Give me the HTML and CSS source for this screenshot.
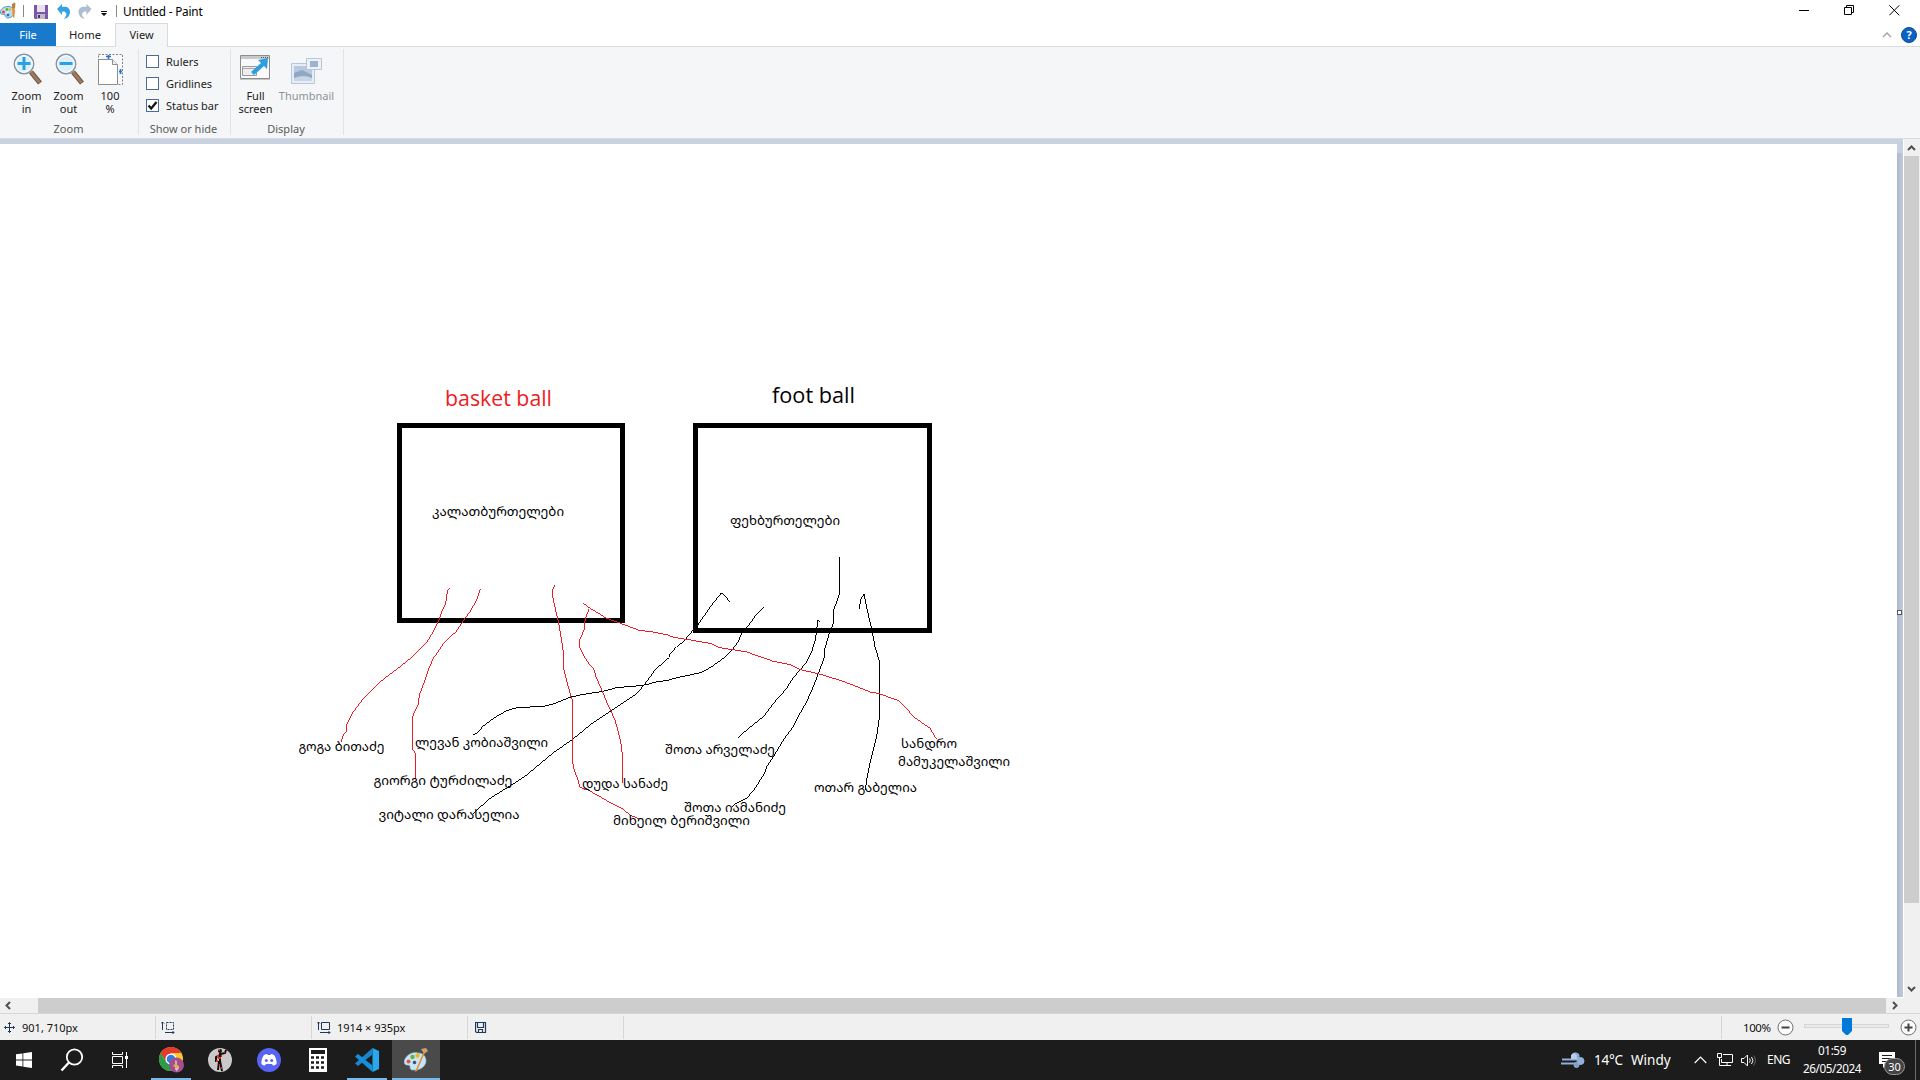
FILE: index.html
```html
<!DOCTYPE html>
<html lang="en">
<head>
<meta charset="utf-8">
<title>Untitled - Paint</title>
<link rel="stylesheet" href="styles.css">
</head>
<body>
<div class="screen">
  <header class="titlebar">
    <svg class="app-icon" width="17" height="18" viewBox="0 0 17 18"><path d="M.5 11C0 7 4 4.500 8 4.500c4 0 6 2 6 5.500s-3 6-6.500 6c-2 0-1.500-2-2.500-3S1 13 .5 11z" fill="#b9def0" stroke="#4a9cc0"/><circle cx="3.500" cy="10" r="1.500" fill="#e8483a"/><circle cx="7" cy="7.500" r="1.400" fill="#5fb236"/><circle cx="10" cy="7.500" r="1.200" fill="#f0b523"/><circle cx="8" cy="13" r="1.400" fill="#2772b8"/><circle cx="7.500" cy="10.500" r="1" fill="#fff"/><path d="M12.200 6h2.600l-.4 10-1.600-1z" fill="#ef8a22"/><path d="M12 2l2.500-1.500L15.500 2 15 6h-3z" fill="#b98048"/></svg>
    <i class="tsep first"></i>
    <svg class="save" width="14" height="14" viewBox="0 0 14 14"><path d="M0 0h14v14H1l-1-1z" fill="#7e55a8"/><path d="M3 0h8v7H3z" fill="#e6e3ee"/><path d="M3 9h8v5H3z" fill="#bdbac8"/><path d="M4 10h2v3H4z" fill="#4d3470"/></svg>
    <svg class="undo" width="14" height="15" viewBox="0 0 14 15"><path d="M0 5l5-5v3c5-1 8 1 8 5 0 3-2 6-6 7 2-3 3-4 2-6-1-1-2-2-4-1v3z" fill="#35a3e3"/></svg>
    <svg class="redo" width="14" height="15" viewBox="0 0 14 15"><path d="M13.500 5l-5-5v3c-5-1-8 1-8 5 0 3 2 6 6 7-2-3-3-4-2-6 1-1 2-2 4-1v3z" fill="#abbfd0"/></svg>
    <svg class="more" width="7" height="5" viewBox="0 0 7 5"><path d="M0 0h6v1H0zM0 2h6L3 5z" fill="#111"/></svg>
    <i class="tsep second"></i>
    <span class="title">Untitled - Paint</span>
    <div class="window-buttons">
      <svg width="11" height="11" viewBox="0 0 11 11"><path d="M0 5.500h10" stroke="#000"/></svg>
      <svg width="11" height="11" viewBox="0 0 11 11" fill="none" stroke="#000"><path d="M.5 2.500h7v7h-7zM2.500 2V.500h7v7H8"/></svg>
      <svg width="11" height="11" viewBox="0 0 11 11"><path d="M.3.300l10 10M10.300.300l-10 10" stroke="#000"/></svg>
    </div>
  </header>
  <nav class="tabs">
    <span class="tab file">File</span><span class="tab home">Home</span><span class="tab view">View</span>
    <div class="tab-tools">
      <svg width="10" height="6" viewBox="0 0 10 6"><path d="M1 5l4-4 4 4" fill="none" stroke="#a0a0a0" stroke-width="1.300"/></svg>
      <span class="help">?</span>
    </div>
  </nav>
  <section class="ribbon">
    <div class="group zoom-group">
      <div class="tools">
        <div class="tool lens">
          <svg width="30" height="33" viewBox="0 0 30 33"><path d="M18 19l9 11" stroke="#66513f" stroke-width="5"/><path d="M18 19l8.500 10.500" stroke="#a1785a" stroke-width="3"/><circle cx="11" cy="11" r="9.700" fill="#dff0fa" stroke="#8796a5" stroke-width="1.600"/><circle cx="11" cy="11" r="8.300" fill="none" stroke="#fff"/><path d="M4.500 10.500h13M11 4v13" stroke="#2ba0e5" stroke-width="3"/></svg>
          <span>Zoom<br>in</span>
        </div>
        <div class="tool lens">
          <svg width="30" height="33" viewBox="0 0 30 33"><path d="M18 19l9 11" stroke="#66513f" stroke-width="5"/><path d="M18 19l8.500 10.500" stroke="#a1785a" stroke-width="3"/><circle cx="11" cy="11" r="9.700" fill="#dff0fa" stroke="#8796a5" stroke-width="1.600"/><circle cx="11" cy="11" r="8.300" fill="none" stroke="#fff"/><path d="M4.500 10.500h13" stroke="#2ba0e5" stroke-width="3"/></svg>
          <span>Zoom<br>out</span>
        </div>
        <div class="tool page">
          <svg width="26" height="33" viewBox="0 -1 26 33"><path d="M.5.500h24v30H.500z" fill="#f7f8f9" stroke="#808080" stroke-dasharray="2 1.500"/><path d="M.5 5.500h14l5 5v20H.500z" fill="#fff" stroke="#8d8d8d"/><path d="M14.500 5.500v5h5" fill="#eee" stroke="#8d8d8d"/><path d="M10.500 1v4M8 2.500h5M21 17.500h3M22.500 15v5" stroke="#1c78d8" stroke-width="1.600"/></svg>
          <span>100<br>%</span>
        </div>
      </div>
      <div class="caption">Zoom</div>
    </div>
    <div class="group show-group">
      <div class="checks">
        <div class="check"><i class="box"></i>Rulers</div>
        <div class="check"><i class="box"></i>Gridlines</div>
        <div class="check"><i class="box"><svg width="11" height="11" viewBox="0 0 11 11"><path d="M1.500 5.500l2.700 3L9.500 2" fill="none" stroke="#111" stroke-width="2.200"/></svg></i>Status bar</div>
      </div>
      <div class="caption">Show or hide</div>
    </div>
    <div class="group display-group">
      <div class="tools">
        <div class="tool full">
          <svg width="32" height="33" viewBox="1 0 32 33"><path d="M1.500 2.500h29v23h-29z" fill="#fafafa" stroke="#8c8c8c"/><path d="M2 3h28v3H2z" fill="#c9c9c9"/><path d="M22 4.500h7" stroke="#555" stroke-dasharray="1 1"/><path d="M3.500 13.500h14v9h-14z" fill="#eee" stroke="#999"/><path d="M4 15.500h13" stroke="#aaa"/><path d="M12 19l10-9-3-3 10-2-1 11-3-3-10 9z" fill="#2d9fe0"/><path d="M1 26.500h30" stroke="#c5c5c5"/></svg>
          <span>Full<br>screen</span>
        </div>
        <div class="tool thumb">
          <svg width="32" height="33" viewBox="0 -2 32 33"><path d="M.5 8.500h23v20H.500z" fill="#e6edf6" stroke="#b9c7da"/><path d="M3 11h18v15H3z" fill="#b7c8df"/><path d="M3 18l8-3 10 5v5H3z" fill="#8fa6c5"/><path d="M3 23q10-4 18 0v3H3z" fill="#c8d5e6"/><path d="M15.500 3.500h15v11h-15z" fill="#edf2f8" stroke="#b9c7da"/><path d="M19 6h8v6h-8z" fill="#9db2cf"/></svg>
          <span>Thumbnail</span>
        </div>
      </div>
      <div class="caption">Display</div>
    </div>
  </section>
  <main class="workspace">
    <div class="paper">
      <svg class="drawing" width="1897" height="854" viewBox="0 144 1897 854">
        <g fill="none" stroke="#000" stroke-width="5">
          <rect x="399.500" y="425.500" width="223" height="195"/>
          <rect x="695.500" y="425.500" width="234" height="205"/>
        </g>
        <g class="strokes black" transform="translate(290 580) scale(.33333)">
          <polyline points="1319,65 1305,48 1298,40 1293,40 1260,82 1222,137 1208,152 1180,185 1160,200 1140,222 1138,232 1125,243 1095,270 1070,305 1050,330 1035,345 960,395 900,435 848,478 790,518 710,585 660,618 600,655 550,700"/>
          <polyline points="1420,82 1398,105 1375,137 1352,165 1345,185 1325,212 1300,235 1265,260 1235,277 1200,285 1160,293 1130,302 1100,305 1070,314 1050,317 980,323 935,335 880,343 843,351 790,372 755,380 685,382 650,392 615,412 580,438 560,460 548,466"/>
          <polyline points="1589,125 1583,121 1582,135 1576,180 1565,215 1548,250 1530,269 1505,300 1490,325 1455,365 1420,410 1370,450 1345,472"/>
          <polyline points="1648.500,-68 1648.500,42 1632,88 1630,130 1618,160 1605,205 1603,233 1585,280 1570,320 1550,365 1530,400 1510,440 1480,480 1450,530 1430,560 1425,577 1395,625 1370,655 1335,672 1325,682"/>
          <polyline points="1708,86 1712,58 1722,43 1735,105 1747,155 1755,200 1768.500,245 1768.500,410 1760,470 1750,510 1740,550 1730,600 1726,630"/>
        </g>
        <g class="strokes red" transform="translate(290 580) scale(.33333)">
          <polyline points="479,25 473,30 467,70 455,95 445,125 427,160 410,187 370,228 330,260 270,306 225,350 190,395 170,435 168,455 158,468 154,485"/>
          <polyline points="571,28 560,60 540,95 520,122 498,155 465,185 430,235 415,270 405,300 388,345 385,372 367.500,410 367.500,508 376.500,520 376.500,597"/>
          <polyline points="794,16 788,28 789,55 797,90 806,130 816,190 821,225 822,270 832,310 843,350 847.500,360 847.500,545 853,572 863,595 869,622 890,628 930,650 960,668 1000,688 1020,705 1046,716"/>
          <polyline points="897,87 886,115 882,150 869,180 870,205 880,225 897,252 910,264 918,290 935,330 952,370 975,420 985,455 995,500 997.500,535 997.500,610"/>
          <polyline points="880,70 905,88 930,102 945,113 1000,133 1047,151 1085,155 1130,164 1150,172 1190,178 1265,191 1285,202 1370,216 1450,244 1502,254 1530,269 1585,281 1660,304 1700,320 1740,336 1765,340 1825,362 1850,385 1870,410 1920,445 1940,478"/>
        </g>
        <g class="heading">
          <text x="445" y="406" textLength="107" lengthAdjust="spacingAndGlyphs" fill="#ed1c24">basket ball</text>
          <text x="772" y="403" textLength="83" lengthAdjust="spacingAndGlyphs">foot ball</text>
        </g>
        <g class="names">
          <text x="432" y="516" textLength="132" lengthAdjust="spacingAndGlyphs">კალათბურთელები</text>
          <text x="730" y="525" textLength="110" lengthAdjust="spacingAndGlyphs">ფეხბურთელები</text>
          <text x="298.500" y="751" textLength="86" lengthAdjust="spacingAndGlyphs">გოგა ბითაძე</text>
          <text x="415" y="747" textLength="133" lengthAdjust="spacingAndGlyphs">ლევან კობიაშვილი</text>
          <text x="373.500" y="785" textLength="139" lengthAdjust="spacingAndGlyphs">გიორგი ტურძილაძე</text>
          <text x="378.500" y="819" textLength="141" lengthAdjust="spacingAndGlyphs">ვიტალი დარასელია</text>
          <text x="582" y="788" textLength="86" lengthAdjust="spacingAndGlyphs">დუდა სანაძე</text>
          <text x="613" y="825" textLength="137" lengthAdjust="spacingAndGlyphs">მიხეილ ბერიშვილი</text>
          <text x="665" y="754" textLength="110" lengthAdjust="spacingAndGlyphs">შოთა არველაძე</text>
          <text x="684" y="812" textLength="102" lengthAdjust="spacingAndGlyphs">შოთა იამანიძე</text>
          <text x="814" y="792" textLength="103" lengthAdjust="spacingAndGlyphs">ოთარ გაბელია</text>
          <text x="901" y="748" textLength="56" lengthAdjust="spacingAndGlyphs">სანდრო</text>
          <text x="898" y="766" textLength="112" lengthAdjust="spacingAndGlyphs">მამუკელაშვილი</text>
        </g>
      </svg>
    </div>
    <div class="paper-edge"><i class="handle"></i></div>
    <div class="vscroll">
      <svg width="9" height="17" viewBox="0 0 9 17"><path d="M1 11l3.500-3.500L8 11" fill="none" stroke="#505050" stroke-width="2"/></svg>
      <i class="vthumb"></i>
      <svg class="down" width="9" height="17" viewBox="0 0 9 17"><path d="M1 6l3.500 3.500L8 6" fill="none" stroke="#505050" stroke-width="2"/></svg>
    </div>
  </main>
  <div class="hscroll">
    <svg width="38" height="15" viewBox="0 0 38 15"><path d="M10 4L6.500 7.500 10 11" fill="none" stroke="#505050" stroke-width="2"/></svg>
    <i class="hthumb"></i>
    <svg width="34" height="15" viewBox="0 0 34 15"><path d="M7 4l3.500 3.500L7 11" fill="none" stroke="#505050" stroke-width="2"/></svg>
  </div>
  <footer class="status">
    <div class="cell"><svg width="12" height="12" viewBox="0 0 12 12" fill="none" stroke="#1e395b"><path d="M5.500.500v10M.500 5.500h10M4 2L5.500.500 7 2M4 9l1.500 1.500L7 9M2 4L.500 5.500 2 7M9 4l1.500 1.500L9 7"/></svg><span>901, 710px</span></div>
    <div class="cell sel"><svg width="14" height="13" viewBox="0 0 14 13" fill="none" stroke="#1e395b"><path d="M1.500 1v8M0 2.500l1.500-1.500L3 2.500M4 11.500h9M11.500 10l1.500 1.500-1.500 1.500"/><path d="M5.500 1.500h7v7h-7z" stroke-dasharray="2 1"/></svg></div>
    <div class="cell size"><svg width="14" height="13" viewBox="0 0 14 13" fill="none" stroke="#1e395b"><path d="M1.500 1v8M0 2.500l1.500-1.500L3 2.500M3 11.500h10M11.500 10l1.500 1.500-1.500 1.500M4.500 1.500h8v7h-8z"/></svg><span>1914 × 935px</span></div>
    <div class="cell disk"><svg width="12" height="12" viewBox="0 0 12 12" fill="none" stroke="#1e395b"><path d="M.5.500h10v10h-9l-1-1zM2.500.500v5h6v-5M3.500 10.500v-3h4v3" stroke-width="1.200"/></svg></div>
    <div class="cell rest"></div>
    <div class="zoombar">
      <span class="pct">100%</span>
      <svg width="17" height="17" viewBox="0 0 17 17"><circle cx="8.500" cy="8.500" r="7.500" fill="#fbfbfb" stroke="#6f6f6f"/><path d="M4.500 8.500h8" stroke="#444" stroke-width="2"/></svg>
      <div class="slider"><svg class="knob" width="10" height="17" viewBox="0 0 10 17"><path d="M0 0h10v13l-4 4H4l-4-4z" fill="#0078d7"/></svg></div>
      <svg width="17" height="17" viewBox="0 0 17 17"><circle cx="8.500" cy="8.500" r="7.500" fill="#fbfbfb" stroke="#6f6f6f"/><path d="M4.500 8.500h8M8.500 4.500v8" stroke="#444" stroke-width="2"/></svg>
    </div>
  </footer>
  <div class="taskbar">
    <div class="slot"><svg width="16" height="16" viewBox="0 0 16 16"><path d="M0 2.300L6.500 1.400v6.100H0zM7.300 1.300L16 0v7.500H7.300zM0 8.400h6.500v6.100L0 13.600zM7.300 8.400H16V16l-8.700-1.300z" fill="#fff"/></svg></div>
    <div class="slot search"><svg width="24" height="24" viewBox="0 0 24 24" fill="none" stroke="#fff"><circle cx="14.500" cy="9" r="7.700" stroke-width="1.800"/><path d="M9 14.500L1.500 22.500" stroke-width="2.400"/></svg></div>
    <div class="slot timeline"><svg width="17" height="17" viewBox="0 0 17 17" fill="none" stroke="#fff"><path d="M.5 0v2.500h10V0M.500 4.500h10v7H.500zM.500 16v-2.500h10V16M14.500 0v16"/><path d="M13 4h3v3h-3z" fill="#fff" stroke="none"/></svg></div>
    <div class="slot open"><svg width="26" height="26" viewBox="-1 0 26 26"><circle cx="12" cy="12" r="12" fill="#fbc92d"/><path d="M1.600 6A12 12 0 0 1 22.400 6H12L7 15z" fill="#e33b2e"/><path d="M1.600 6A12 12 0 0 0 12 24l5-9-10 0z" fill="#2a9d48"/><circle cx="12" cy="12" r="5.600" fill="#fff"/><circle cx="12" cy="12" r="4.300" fill="#347de0"/><circle cx="17.500" cy="18" r="7.500" fill="#a54d91"/><path d="M16 13l2 1v4l2 1v3l-4 1v-3l-2-1 2-2z" fill="#dcb06d"/><path d="M16 21l3 0-1 4z" fill="#d8c1dd"/></svg></div>
    <div class="slot"><svg width="24" height="24" viewBox="0 0 24 24"><circle cx="12" cy="12" r="12" fill="#c9c9c9"/><g fill="none" stroke="#111" stroke-width="2"><path d="M12 5v9M11 13l-1 9M12 13l2 10M12 7L8 9v5M13 6l4-1 1-3"/></g><circle cx="12" cy="3" r="2" fill="#111"/><path d="M11 2h1M9 8h2M10 10h3M8 13h2M11 17h1M13 20h1M16 4h1M13 8h1" stroke="#e02a20" stroke-width="2"/></svg></div>
    <div class="slot"><svg width="24" height="24" viewBox="0 0 24 24"><circle cx="12" cy="12" r="12" fill="#5865f2"/><path d="M7 7q2-1 3-1l.6 1h2.800L14 6q1 0 3 1 3 4 2.500 9-2 1.500-3.500 1.500L15 16H9l-1 1.500Q6 17.500 4.500 16 4 11 7 7z" fill="#fff"/><circle cx="9.300" cy="12.500" r="1.500" fill="#5865f2"/><circle cx="14.700" cy="12.500" r="1.500" fill="#5865f2"/></svg></div>
    <div class="slot"><svg width="18" height="24" viewBox="0 0 18 24"><path d="M0 0h18v24H0z" fill="#fff"/><path d="M2 2h14v4H2z" fill="#1c1c1c"/><path d="M2 9.500h3M7 9.500h3M12 9.500h3M2 14.500h3M7 14.500h3M12 14.500h3M2 19.500h3M7 19.500h3M12 19.500h3" stroke="#1c1c1c" stroke-width="2.500"/></svg></div>
    <div class="slot open"><svg width="24" height="24" viewBox="0 0 24 24"><path d="M17.500 0L24 3v18l-6.500 3z" fill="#29a8ee"/><path d="M17.500 0v6.500L3 18l-3-2.500z" fill="#1c84cc"/><path d="M17.500 24v-6.500L3 6 0 8.500z" fill="#1490dc"/></svg></div>
    <div class="slot open active"><svg width="24" height="24" viewBox="0 0 24 24"><path d="M0 14C1 8 8 3 14 5c5 0 8 3 8 8s-6 10-13 9c-3 0-3-2-3-4-1-2-5 1-6-4z" fill="#c8e5f5" stroke="#84b8d8" stroke-width=".6"/><circle cx="4.500" cy="13.500" r="2" fill="#e25447"/><circle cx="8.500" cy="9" r="2.200" fill="#61b53d"/><circle cx="13.500" cy="7.500" r="2.200" fill="#f0b523"/><circle cx="10.500" cy="14.500" r="1.800" fill="#35566f"/><path d="M19 5l1.500.500L13 23l-2 1z" fill="#e98b26"/><path d="M17 1l5-1 2 3-4 3z" fill="#cba06d"/></svg></div>
    <div class="tray">
      <svg class="weather" width="24" height="17" viewBox="0 0 24 17" fill="none" stroke="#8fb1da"><path d="M1 7.500h13.500a3 3 0 1 0-3-3.500" stroke-width="2.200"/><path d="M10 7V3l3-2 3 2v4z" fill="#b7cce8" stroke="none"/><path d="M0 11.500h20" stroke-width="2"/><circle cx="19.500" cy="9" r="3.500" fill="#8fb1da"/><circle cx="15.500" cy="13" r="2.500" fill="#7c9fca"/></svg>
      <span class="temp">14°C</span><span class="wind">Windy</span>
      <svg class="chev" width="13" height="8" viewBox="0 0 13 8"><path d="M.7 7L6.500 1l5.800 6" fill="none" stroke="#fff" stroke-width="1.200"/></svg>
      <svg class="net" width="16" height="14" viewBox="0 0 16 14" fill="none" stroke="#fff"><path d="M6 1.500h9.500v8H4.500V6M10 10v3M5 12.500h9M.500.500h4v4h-4zM2.500 4.500v8h3"/></svg>
      <svg class="vol" width="17" height="13" viewBox="0 0 17 13" fill="none" stroke="#fff"><path d="M.5 4.500H3L6.500 1v11L3 8.500H.500z"/><path d="M8.500 4.500q1.500 2 0 4M10.500 3q3 3.500 0 7"/><path d="M12.500 1.500q4 5 0 10" stroke="#666"/></svg>
      <span class="lang">ENG</span>
      <div class="clock"><span>01:59</span><span>26/05/2024</span></div>
      <div class="notify"><svg width="16" height="16" viewBox="0 0 16 16"><path d="M0 0h16v12H8l-4 4v-4H0z" fill="#fff"/><path d="M3 3.500h10M3 6.500h10M3 9.500h6" stroke="#1c1c1c"/></svg><span class="badge">30</span></div>
      <i class="peek"></i>
    </div>
  </div>
</div>
</body>
</html>
```
FILE: styles.css
```css
* { box-sizing: border-box; }
body { margin: 0; background: #fff; font-family: "Noto Sans", "Open Sans", "DejaVu Sans", sans-serif; font-size: 11px; color: #222; }
svg { display: block; flex: none; }
i { display: block; flex: none; }
span { white-space: nowrap; }
.screen { width: 1920px; height: 1080px; overflow: hidden; display: flex; flex-direction: column; }

.titlebar { height: 23px; flex: none; display: flex; align-items: center; background: #fff; }
.app-icon { width: 17px; margin-top: -1px; }
.tsep { width: 1px; height: 12px; background: #888; margin-top: -1px; }
.tsep.first { margin-left: 6px; }
.save { margin-left: 10px; margin-top: 1px; }
.undo { margin-left: 9px; }
.redo { margin-left: 7px; }
.more { margin-left: 9px; margin-top: 3px; }
.tsep.second { margin-left: 8px; }
.title { margin-left: 6px; width: 90px; font-size: 11.800px; color: #000; margin-top: -1px; letter-spacing: -.2px; }
.window-buttons { margin-left: auto; margin-right: 20px; display: flex; gap: 34px; margin-top: -3px; }

.tabs { height: 24px; flex: none; display: flex; border-bottom: 1px solid #dadbdc; }
.tab { height: 23px; line-height: 24px; text-align: center; }
.tab.file { width: 56px; background: #1979ca; color: #fff; }
.tab.home { width: 59px; padding-right: 1px; font-size: 11.300px; }
.tab.view { width: 53px; height: 24px; background: #f5f6f7; border: 1px solid #dadbdc; border-bottom: 0; line-height: 22px; }
.tab-tools { margin-left: auto; margin-right: 3px; display: flex; align-items: center; gap: 9px; }
.help { width: 16px; height: 16px; border-radius: 8px; background: #0a63c4; border: 1px solid #0b4d92; color: #fff; font-weight: bold; line-height: 14px; text-align: center; }

.ribbon { height: 92px; flex: none; display: flex; background: #f5f6f7; border-bottom: 1px solid #dadbdc; padding-top: 2px; }
.group { height: 86px; border-right: 1px solid #e2e3e4; display: flex; flex-direction: column; }
.zoom-group { width: 139px; }
.show-group { width: 92px; }
.display-group { width: 113px; }
.tools { display: flex; flex: none; padding-top: 4px; height: 73px; }
.zoom-group .tools { padding-left: 5px; }
.tool { width: 42px; display: flex; flex-direction: column; align-items: center; line-height: 13px; text-align: center; }
.tool span { margin-top: 3px; }
.lens svg { margin-left: 3px; }
.page svg { margin-left: 2px; }
.lens span { margin-left: 1px; }
.full { width: 49px; }
.thumb { width: 53px; color: #8d9299; }
.checks { padding: 1px 0 0 7px; height: 73px; flex: none; }
.check { height: 22px; display: flex; align-items: center; gap: 7px; }
.box { width: 13px; height: 13px; border: 1px solid #4a6a98; background: #fff; }
.caption { text-align: center; line-height: 13px; padding-right: 2px; color: #5a5a5a; }
.zoom-group .caption { padding-right: 1px; }

.workspace { height: 859px; flex: none; display: flex; background: #c8d1e2; }
.paper { width: 1897px; padding-top: 5px; }
.drawing { background: #fff; }
.strokes { fill: none; stroke-width: 3; shape-rendering: crispEdges; }
.black { stroke: #000; }
.red { stroke: #ed1c24; }
.heading { font-family: "Open Sans", "Noto Sans", sans-serif; font-size: 21px; }
.names { font-family: "Noto Sans Georgian", "DejaVu Sans", sans-serif; font-size: 13px; fill: #000; }
.paper-edge { width: 7px; padding-top: 14px; position: relative; border-right: 1px solid #fff; border-bottom: 1px solid #fff; }
.paper-edge::before { content: ""; display: block; height: 844px; background: linear-gradient(90deg, #adb9cd, #c0cadb); }
.handle { position: absolute; left: 0; top: 471px; width: 5px; height: 5px; border: 1px solid #555; background: #fff; }
.vscroll { width: 16px; background: #f0f0f0; display: flex; flex-direction: column; align-items: center; padding-right: 1px; }
.vthumb { width: 15px; height: 747px; background: #cdcdcd; }
.down { margin-top: auto; }
.hscroll { height: 15px; flex: none; display: flex; background: #f0f0f0; }
.hthumb { width: 1848px; height: 15px; background: #cdcdcd; }

.status { height: 27px; flex: none; display: flex; background: #f0f0f0; border-top: 1px solid #d7d7d7; padding-top: 2px; color: #111; }
.cell { width: 156px; height: 23px; border-right: 1px solid #d7d7d7; display: flex; align-items: center; padding-left: 4px; }
.cell span { margin-left: 6px; margin-top: -1px; }
.sel, .size { padding-left: 5px; }
.disk { padding-left: 7px; }
.rest { width: 1098px; }
.zoombar { flex: 1; display: flex; align-items: center; padding-left: 21px; height: 23px; }
.pct { width: 34px; letter-spacing: -.4px; font-size: 11.500px; margin-top: -1px; }
.slider { width: 85px; height: 4px; margin: 0 11px 3px 10px; border: 1px solid #d6d6d6; background: #e7eaea; position: relative; }
.knob { position: absolute; left: 37px; top: -7px; }

.taskbar { height: 40px; flex: none; background: #1c1c1c; display: flex; gap: 1px; color: #fff; }
.slot { width: 48px; height: 40px; display: flex; align-items: center; justify-content: center; position: relative; }
.search { padding-right: 2px; }
.timeline { padding-right: 4px; }
.open::after { content: ""; position: absolute; left: 4px; right: 4px; bottom: 0; height: 2px; background: #76b9ed; }
.active { background: #4a4a4a; }
.active::after { left: 0; right: 0; }
.tray { margin-left: auto; display: flex; align-items: center; height: 40px; width: 359px; }
.temp { font-size: 13.500px; margin-left: 9px; width: 37px; letter-spacing: -.2px; }
.wind { font-size: 13.500px; width: 63px; }
.net { margin-left: 10px; }
.vol { margin-left: 8px; }
.lang { margin-left: 9px; width: 24px; font-size: 12px; letter-spacing: -.5px; margin-top: -1px; }
.clock { margin-left: 8px; width: 66px; display: flex; flex-direction: column; align-items: center; font-size: 11.700px; line-height: 18px; letter-spacing: -.4px; margin-top: -2px; }
.notify { margin-left: 14px; width: 36px; height: 16px; position: relative; }
.badge { position: absolute; left: 5px; top: 6px; width: 21px; height: 17px; border: 1px solid #999; border-radius: 9px; background: #444; font-size: 11px; line-height: 15px; text-align: center; }
.peek { width: 1px; height: 40px; background: #6a6a6a; }
```
